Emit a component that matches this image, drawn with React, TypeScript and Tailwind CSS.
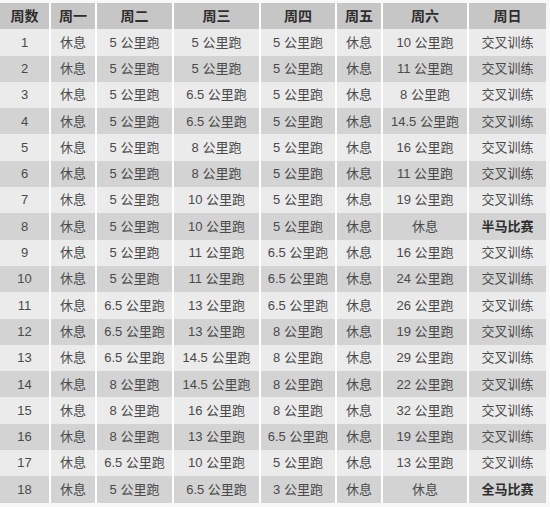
import React from "react";

const headers = ["周数", "周一", "周二", "周三", "周四", "周五", "周六", "周日"];

const K = (v: string) => (v === "休息" ? v : `${v} 公里跑`);

const raw: string[][] = [
  ["5", "5", "5", "10", "交叉训练"],
  ["5", "5", "5", "11", "交叉训练"],
  ["5", "6.5", "5", "8", "交叉训练"],
  ["5", "6.5", "5", "14.5", "交叉训练"],
  ["5", "8", "5", "16", "交叉训练"],
  ["5", "8", "5", "11", "交叉训练"],
  ["5", "10", "5", "19", "交叉训练"],
  ["5", "10", "5", "休息", "半马比赛"],
  ["5", "11", "6.5", "16", "交叉训练"],
  ["5", "11", "6.5", "24", "交叉训练"],
  ["6.5", "13", "6.5", "26", "交叉训练"],
  ["6.5", "13", "8", "19", "交叉训练"],
  ["6.5", "14.5", "8", "29", "交叉训练"],
  ["8", "14.5", "8", "22", "交叉训练"],
  ["8", "16", "8", "32", "交叉训练"],
  ["8", "13", "6.5", "19", "交叉训练"],
  ["6.5", "10", "5", "13", "交叉训练"],
  ["5", "6.5", "3", "休息", "全马比赛"],
];

const rows = raw.map((r, i) => [
  String(i + 1),
  "休息",
  K(r[0]),
  K(r[1]),
  K(r[2]),
  "休息",
  K(r[3]),
  r[4],
]);

export default function App() {
  return (
    <div
      className="w-[550px] h-[507px] bg-[#f8f8f8] pt-[3px]"
      style={{ fontFamily: '"Liberation Sans", "Noto Sans CJK SC", sans-serif' }}
    >
      <div className="w-[546px] grid grid-cols-[49px_44px_75px_85px_74px_44px_84px_77px] gap-x-[2px] auto-rows-[26.3px] bg-white">
        {headers.map((h) => (
          <div
            key={h}
            className="bg-[#c6c6c6] flex items-center justify-center text-[14px] font-bold text-[#2e2e2e]"
          >
            {h}
          </div>
        ))}
        {rows.map((r, i) =>
          r.map((c, j) => {
            const bold = c === "半马比赛" || c === "全马比赛";
            return (
              <div
                key={`${i}-${j}`}
                className={`${i % 2 === 0 ? "bg-[#ebebeb]" : "bg-[#d3d3d3]"} flex items-center justify-center text-[13px] whitespace-nowrap ${
                  bold ? "font-bold text-[#2e2e2e]" : "text-[#4a4a4a]"
                }`}
              >
                {c}
              </div>
            );
          })
        )}
      </div>
    </div>
  );
}
